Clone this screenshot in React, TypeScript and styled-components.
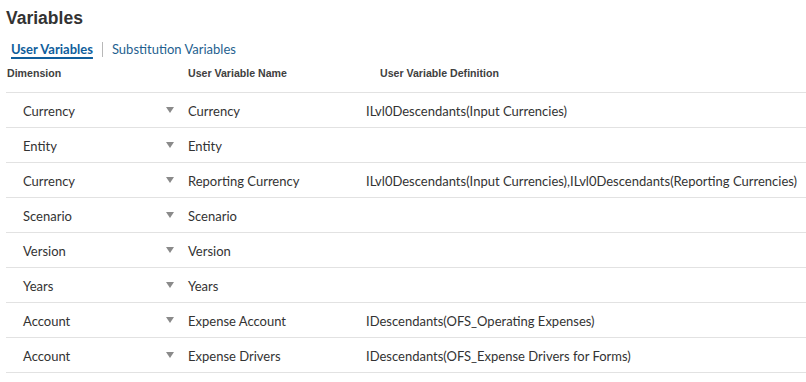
import React from "react";
import styled, { createGlobalStyle } from "styled-components";

const GlobalStyle = createGlobalStyle`
  *, *::before, *::after {
    box-sizing: border-box;
  }
  body {
    margin: 0;
    background: #ffffff;
    font-family: Lato, "Liberation Sans", sans-serif;
    color: #333333;
  }
`;

const Page = styled.div`
  padding: 6px 0 0 6px;
`;

const Title = styled.h1`
  margin: 0;
  font-family: "Liberation Sans", Arial, sans-serif;
  font-size: 17.5px;
  font-weight: 700;
  color: #333333;
  line-height: 24px;
`;

const TabBar = styled.div`
  display: flex;
  align-items: center;
  margin: 10px 0 0 5px;
  height: 18px;
`;

const Tab = styled.span<{ $active?: boolean }>`
  font-size: 13px;
  font-weight: ${(p) => (p.$active ? 700 : 400)};
  color: ${(p) => (p.$active ? "#0f5e9c" : "#1f5f8f")};
  text-decoration: ${(p) => (p.$active ? "underline" : "none")};
  text-underline-offset: 3px;
  text-decoration-thickness: 2px;
`;

const TabDivider = styled.span`
  width: 1px;
  height: 15px;
  background: #b8b8b8;
  margin: 0 9px;
`;

const Table = styled.div`
  display: grid;
  grid-template-columns: 182px 178px 1fr;
  margin-top: 3px;
`;

const HeaderCell = styled.div<{ $pad?: number }>`
  height: 32px;
  display: flex;
  align-items: flex-start;
  padding: 6px 0 0 ${(p) => p.$pad ?? 0}px;
  line-height: 12px;
  font-family: "Liberation Sans", Arial, sans-serif;
  font-size: 10.6px;
  font-weight: 700;
  color: #404040;
  border-bottom: 1px solid #e2e2e2;
`;

const Cell = styled.div<{ $pad?: number }>`
  height: 35px;
  display: flex;
  align-items: center;
  padding: 1px 0 0 ${(p) => p.$pad ?? 0}px;
  font-size: 13px;
  color: #333333;
  border-bottom: 1px solid #e2e2e2;
  white-space: nowrap;
`;

const DimCell = styled(Cell)`
  justify-content: space-between;
  padding-right: 14px;
`;

const Caret = styled.span`
  width: 0;
  height: 0;
  border-left: 4px solid transparent;
  border-right: 4px solid transparent;
  border-top: 6px solid #8a8a8a;
  margin-top: -2px;
`;

const rows = [
  ["Currency", "Currency", "ILvl0Descendants(Input Currencies)"],
  ["Entity", "Entity", ""],
  [
    "Currency",
    "Reporting Currency",
    "ILvl0Descendants(Input Currencies),ILvl0Descendants(Reporting Currencies)",
  ],
  ["Scenario", "Scenario", ""],
  ["Version", "Version", ""],
  ["Years", "Years", ""],
  ["Account", "Expense Account", "IDescendants(OFS_Operating Expenses)"],
  ["Account", "Expense Drivers", "IDescendants(OFS_Expense Drivers for Forms)"],
];

export default function App() {
  return (
    <Page>
      <GlobalStyle />
      <Title>Variables</Title>
      <TabBar>
        <Tab $active>User Variables</Tab>
        <TabDivider />
        <Tab>Substitution Variables</Tab>
      </TabBar>
      <Table>
        <HeaderCell $pad={1}>Dimension</HeaderCell>
        <HeaderCell>User Variable Name</HeaderCell>
        <HeaderCell $pad={14}>User Variable Definition</HeaderCell>
        {rows.map(([dim, name, def], i) => (
          <React.Fragment key={i}>
            <DimCell $pad={17}>
              <span>{dim}</span>
              <Caret />
            </DimCell>
            <Cell>{name}</Cell>
            <Cell>{def}</Cell>
          </React.Fragment>
        ))}
      </Table>
    </Page>
  );
}
